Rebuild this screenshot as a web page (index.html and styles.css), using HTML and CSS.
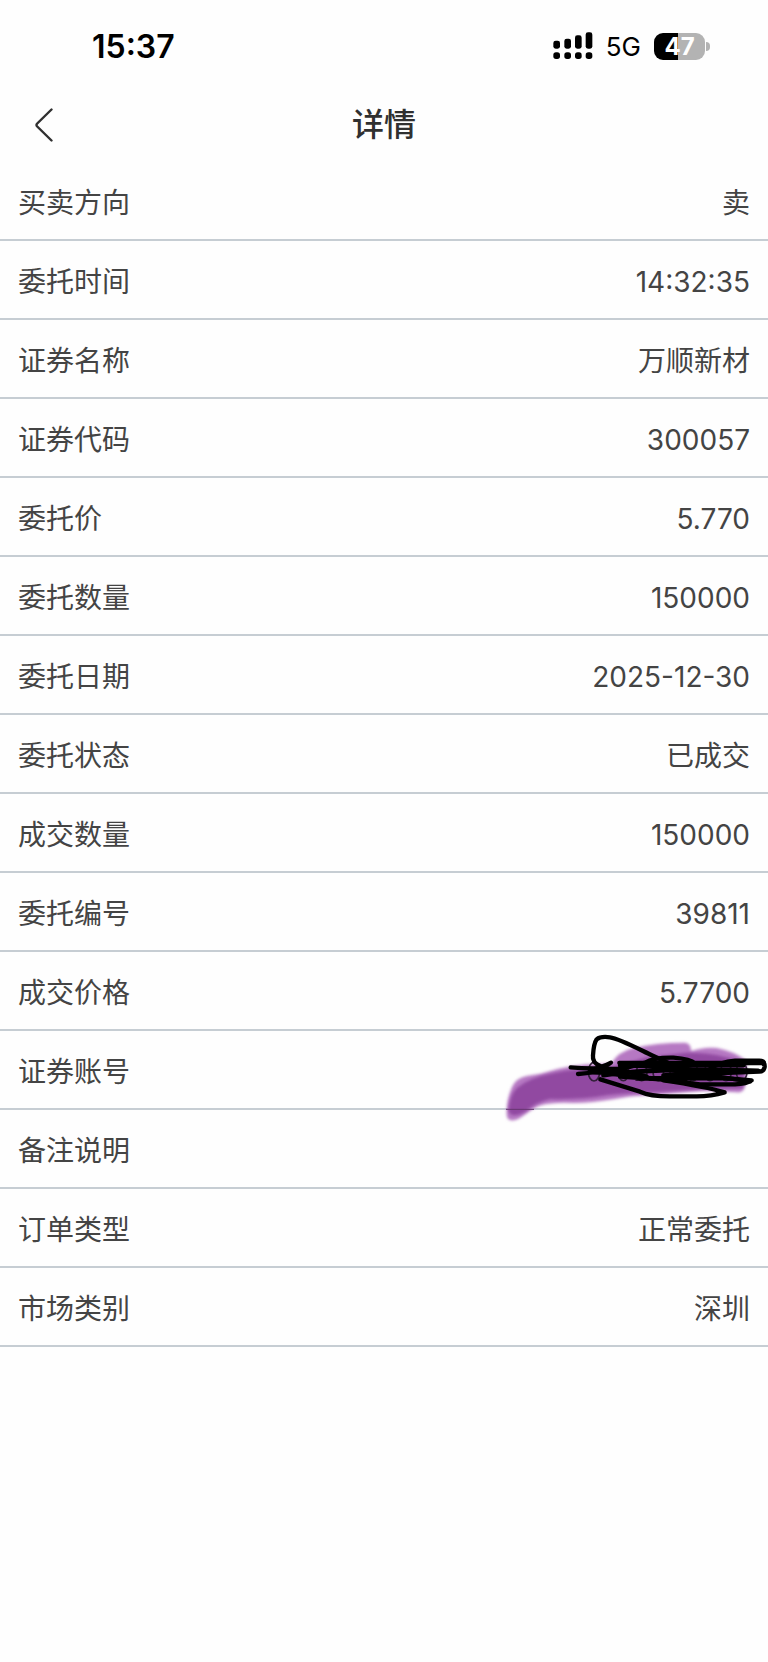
FILE: index.html
```html
<!DOCTYPE html>
<html lang="zh-CN">
<head>
<meta charset="utf-8">
<meta name="viewport" content="width=device-width, initial-scale=1">
<title>详情</title>
<link rel="stylesheet" href="styles.css">
</head>
<body>
<div class="status-bar">
  <time class="clock">15:37</time>
  <div class="indicators">
    <svg class="signal" viewBox="0 0 120 84" aria-hidden="true">
      <rect x="1" y="26" width="20" height="24" rx="7"/>
      <rect x="34" y="20" width="20" height="30" rx="7"/>
      <rect x="66" y="10" width="20" height="40" rx="7"/>
      <rect x="98" y="1" width="20" height="49" rx="7"/>
      <rect x="1" y="61" width="20" height="20" rx="8"/>
      <rect x="34" y="61" width="20" height="20" rx="8"/>
      <rect x="66" y="61" width="20" height="20" rx="8"/>
      <rect x="98" y="61" width="20" height="20" rx="8"/>
    </svg>
    <span class="network">5G</span>
    <span class="battery"><span class="battery-body">47</span><span class="battery-tip"></span></span>
  </div>
</div>
<header class="nav">
  <button class="back" type="button" aria-label="返回">
    <svg class="chevron" viewBox="0 0 18 34" aria-hidden="true"><path d="M16.500 1.500 2 15.700Q1 17 2 18.300L16.500 32.500"/></svg>
  </button>
  <h1 class="title">详情</h1>
</header>
<main>
  <dl class="details">
    <div class="row"><dt>买卖方向</dt><dd>卖</dd></div>
    <div class="row"><dt>委托时间</dt><dd>14:32:35</dd></div>
    <div class="row"><dt>证券名称</dt><dd>万顺新材</dd></div>
    <div class="row"><dt>证券代码</dt><dd>300057</dd></div>
    <div class="row"><dt>委托价</dt><dd>5.770</dd></div>
    <div class="row"><dt>委托数量</dt><dd>150000</dd></div>
    <div class="row"><dt>委托日期</dt><dd>2025-12-30</dd></div>
    <div class="row"><dt>委托状态</dt><dd>已成交</dd></div>
    <div class="row"><dt>成交数量</dt><dd>150000</dd></div>
    <div class="row"><dt>委托编号</dt><dd>39811</dd></div>
    <div class="row"><dt>成交价格</dt><dd>5.7700</dd></div>
    <div class="row redacted"><dt>证券账号</dt><dd>
      <svg class="scribble" viewBox="0 0 834 330" aria-hidden="true">
        <defs><filter id="soft" x="-5%" y="-10%" width="110%" height="120%"><feGaussianBlur stdDeviation="4"/></filter></defs>
        <g class="marker">
          <path class="marker-light" filter="url(#soft)" d="M50 282Q49 240 66 201Q78 174 110 168L152 161Q240 132 330 132L365 130Q382 96 430 84Q500 68 585 68Q604 70 603 94Q640 80 680 84Q730 93 770 122L768 185Q765 220 740 217L640 212Q540 220 470 226Q420 228 370 238Q300 250 245 249Q190 246 148 257C116 270 97 295 72 301Q50 304 50 282Z"/>
          <path class="marker-dark" filter="url(#soft)" d="M56 270Q60 225 80 205Q120 172 190 160Q280 140 370 140L470 112L590 98Q690 96 764 130L758 205L640 208L470 218Q400 218 350 226Q270 240 180 237Q135 248 110 272Q60 300 56 270Z"/>
        </g>
        <path class="rule-through" d="M48 268H132"/>
        <g class="digits">
          <ellipse cx="312" cy="155" rx="17" ry="28"/><ellipse cx="400" cy="157" rx="16" ry="25"/>
          <ellipse cx="455" cy="157" rx="16" ry="25"/><ellipse cx="505" cy="155" rx="16" ry="27"/>
          <ellipse cx="556" cy="155" rx="16" ry="27"/><ellipse cx="608" cy="157" rx="16" ry="26"/>
          <ellipse cx="660" cy="155" rx="16" ry="27"/><ellipse cx="708" cy="155" rx="16" ry="27"/>
          <ellipse cx="755" cy="155" rx="16" ry="27"/>
        </g>
        <g class="pen">
          <path d="M331 138Q306 128 309 106Q311 71 320 58Q332 48 360 52C388 56 430 79 490 108L560 140Q610 158 645 162"/>
          <path d="M242 142Q330 148 400 146L466 128Q490 112 550 113Q602 117 614 130"/>
          <path d="M264 162Q320 162 363 128Q340 140 300 150Q420 174 520 176"/>
          <path d="M331 178L450 215Q480 229 540 229H620Q664 229 704 217Q650 200 520 181"/>
          <path d="M388 129H815Q825 130 824 141Q822 154 808 155L660 161Q580 172 480 176"/>
          <path d="M822 132Q824 122 808 122H735Q690 125 655 150Q630 170 560 174"/>
          <path d="M390 136Q460 140 610 137L760 136"/>
          <path d="M340 166Q450 150 610 150T805 152"/>
          <path d="M300 157Q430 160 500 149T640 158"/>
          <path d="M440 176L700 174L785 181Q770 192 735 193H630L510 178L390 170"/>
          <path d="M520 166Q590 156 655 166L780 184"/>
          <path d="M345 145Q420 154 470 170"/>
        </g>
      </svg>
    </dd></div>
    <div class="row"><dt>备注说明</dt><dd></dd></div>
    <div class="row"><dt>订单类型</dt><dd>正常委托</dd></div>
    <div class="row"><dt>市场类别</dt><dd>深圳</dd></div>
  </dl>
</main>
</body>
</html>
```
FILE: styles.css
```css
* {
  box-sizing: border-box;
}

body {
  margin: 0;
  min-height: 100vh;
  background: #fefefe;
  color: #444;
  font-family: Inter, "Noto Sans CJK SC", sans-serif;
}

.status-bar {
  display: flex;
  align-items: center;
  justify-content: space-between;
  height: 92px;
  padding: 0 58px 0 92px;
  color: #000;
}

.clock {
  font-size: 32px;
  font-weight: 600;
}

.indicators {
  display: flex;
  align-items: center;
}

.signal {
  width: 40px;
  height: 28px;
  margin-right: 13px;
}

.network {
  margin-right: 13px;
  font-size: 26px;
}

.battery {
  display: flex;
  align-items: center;
  gap: 1px;
}

.battery-body {
  width: 51px;
  height: 27px;
  border-radius: 9px;
  background: linear-gradient(90deg, #000 47%, #b3b3b3 47%);
  color: #fff;
  font-size: 24px;
  font-weight: 700;
  line-height: 27px;
  text-align: center;
}

.battery-tip {
  width: 4px;
  height: 9px;
  border-radius: 0 4px 4px 0;
  background: #b3b3b3;
}

.nav {
  display: grid;
  grid-template-columns: 88px 1fr 88px;
  align-items: center;
  height: 66px;
  color: #303030;
}

.back {
  display: flex;
  height: 64px;
  padding: 0 0 0 35px;
  align-items: center;
  border: 0;
  background: none;
  color: inherit;
}

.chevron {
  width: 18px;
  height: 34px;
  fill: none;
  stroke: currentColor;
  stroke-width: 2.4;
  stroke-linecap: round;
}

.title {
  margin: 0;
  font-size: 32px;
  font-weight: 500;
  line-height: 40px;
  text-align: center;
}

.details {
  margin: 4px 0 0;
}

.row {
  display: flex;
  align-items: center;
  justify-content: space-between;
  height: 79px;
  padding: 5px 18px 0;
  border-bottom: 2px solid #c6cdd3;
  font-size: 28px;
  line-height: 40px;
}

.row dd {
  margin: 0;
}

.redacted {
  position: relative;
}

.scribble {
  position: absolute;
  z-index: 1;
  top: -11px;
  right: 0;
  width: 278px;
  height: 110px;
  fill: none;
}

.marker-light {
  fill: #b678c3;
}

.marker-dark {
  fill: #9149a1;
}

.rule-through {
  stroke: #65366f;
  stroke-width: 3;
}

.digits {
  stroke: #33203a;
  stroke-width: 5;
}

.pen {
  stroke: #000;
  stroke-width: 13;
  stroke-linecap: round;
  stroke-linejoin: round;
}
```
